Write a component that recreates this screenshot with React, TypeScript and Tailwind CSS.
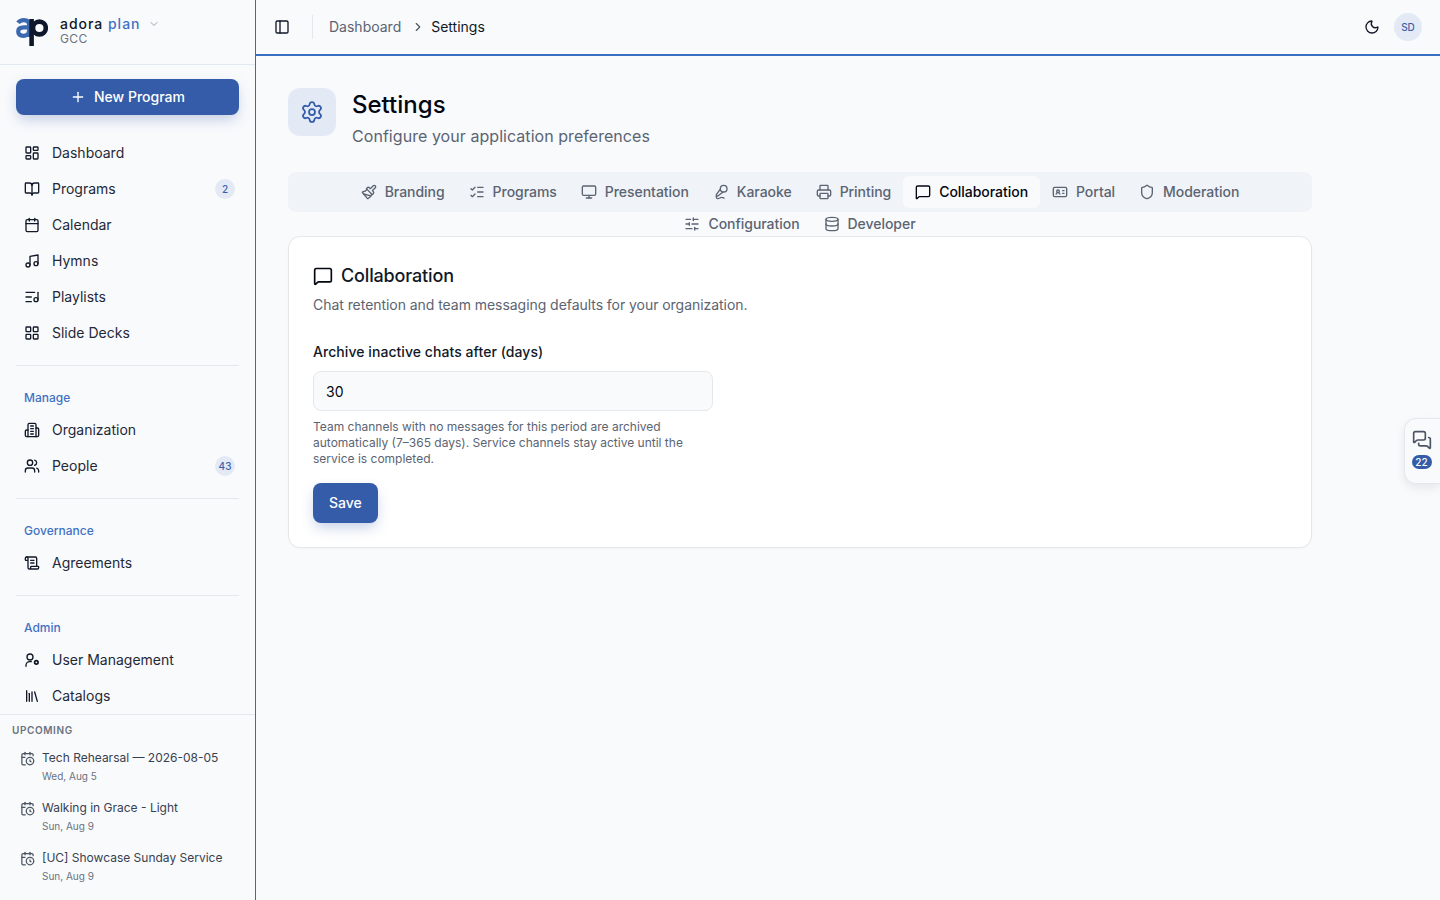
import {
  BookOpen, Calendar, CalendarClock, ChevronDown, ChevronRight, Database, IdCard,
  LayoutDashboard, LayoutGrid, Library, ListChecks, ListMusic, MessageSquare, MessagesSquare, MicVocal,
  Monitor, Moon, Music, Paintbrush, PanelLeft, Plus, Printer, ScrollText, Settings, Shield, SlidersHorizontal,
  Users,
} from 'lucide-react';

type IconProps = { size?: number; className?: string };

function OrgIcon({ size = 16, className }: IconProps) {
  return (
    <svg width={size} height={size} viewBox="0 0 24 24" fill="none" stroke="currentColor" strokeWidth="2" strokeLinecap="round" strokeLinejoin="round" className={className}>
      <path d="M6 22V4a2 2 0 0 1 2-2h8a2 2 0 0 1 2 2v18Z" />
      <path d="M6 12H4a2 2 0 0 0-2 2v6a2 2 0 0 0 2 2h2" />
      <path d="M18 9h2a2 2 0 0 1 2 2v9a2 2 0 0 1-2 2h-2" />
      <path d="M10 6h4" />
      <path d="M10 10h4" />
      <path d="M10 14h4" />
      <path d="M10 18h4" />
    </svg>
  );
}

function UserAdminIcon({ size = 16, className }: IconProps) {
  return (
    <svg width={size} height={size} viewBox="0 0 24 24" fill="none" stroke="currentColor" strokeWidth="2" strokeLinecap="round" strokeLinejoin="round" className={className}>
      <circle cx="9" cy="7.5" r="4.5" />
      <circle cx="18.5" cy="15.5" r="2.6" strokeWidth="2.6" />
      <path d="M3 21.5V20a5.5 5.5 0 0 1 5.5-5.5H11" />
    </svg>
  );
}

const mainNav = [
  { label: 'Dashboard', icon: LayoutDashboard },
  { label: 'Programs', icon: BookOpen, badge: '2' },
  { label: 'Calendar', icon: Calendar },
  { label: 'Hymns', icon: Music },
  { label: 'Playlists', icon: ListMusic },
  { label: 'Slide Decks', icon: LayoutGrid },
];

const groups = [
  {
    title: 'Manage',
    items: [
      { label: 'Organization', icon: OrgIcon },
      { label: 'People', icon: Users, badge: '43' },
    ],
  },
  { title: 'Governance', items: [{ label: 'Agreements', icon: ScrollText }] },
  {
    title: 'Admin',
    items: [
      { label: 'User Management', icon: UserAdminIcon },
      { label: 'Catalogs', icon: Library },
    ],
  },
];

const upcoming = [
  { title: 'Tech Rehearsal — 2026-08-05', date: 'Wed, Aug 5' },
  { title: 'Walking in Grace - Light', date: 'Sun, Aug 9' },
  { title: '[UC] Showcase Sunday Service', date: 'Sun, Aug 9' },
];

const tabs = [
  { label: 'Branding', icon: Paintbrush },
  { label: 'Programs', icon: ListChecks },
  { label: 'Presentation', icon: Monitor },
  { label: 'Karaoke', icon: MicVocal },
  { label: 'Printing', icon: Printer },
  { label: 'Collaboration', icon: MessageSquare, active: true },
  { label: 'Portal', icon: IdCard },
  { label: 'Moderation', icon: Shield },
  { label: 'Configuration', icon: SlidersHorizontal },
  { label: 'Developer', icon: Database },
];

function Logo() {
  return (
    <svg width="32" height="28" viewBox="0 0 32 28" fill="none" className="shrink-0">
      <path d="M2 4.8C3.5 2.8 5.6 2.1 7.8 2.1c3.6 0 5.4 2 5.4 5.2V19" stroke="#3c68b0" strokeWidth="4.2" />
      <path d="M13 9.4H8c-3.4 0-5.8 1.4-5.8 4.2 0 2.9 2.3 4.2 5.2 4.2 2.8 0 5.6-1.6 5.6-4.8" stroke="#3c68b0" strokeWidth="4.2" />
      <circle cx="23.4" cy="10" r="6.4" stroke="#0f172a" strokeWidth="4.6" />
      <path d="M15.6 1v27" stroke="#0f172a" strokeWidth="4.6" />
    </svg>
  );
}

function NavItem({ label, icon: Icon, badge }: { label: string; icon: (p: IconProps) => React.ReactNode; badge?: string }) {
  return (
    <a className="flex h-9 items-center gap-3 rounded-lg pl-2 pr-1 text-sm text-[#1f2937]">
      <Icon size={16} className="shrink-0 text-[#111827]" />
      <span className="flex-1 truncate">{label}</span>
      {badge && (
        <span className="flex h-5 w-5 items-center justify-center rounded-full bg-[#e3eaf5] text-[10px] font-medium text-[#3d5fa8]">
          {badge}
        </span>
      )}
    </a>
  );
}

function Sidebar() {
  return (
    <aside className="flex h-full w-64 shrink-0 flex-col border-r border-[#2a7a8c] bg-[#f9fafc]">
      <div className="flex h-[65px] shrink-0 items-center gap-3 border-b border-[#e2e8f0] px-4">
        <Logo />
        <div className="-mt-[3px]">
          <div className="flex items-center gap-2">
            <span className="text-sm leading-4 font-medium tracking-[0.07em] text-[#111827]">
              adora <span className="text-[#3f72c4]">plan</span>
            </span>
            <ChevronDown size={12} className="text-[#9ca3af]" />
          </div>
          <div className="text-xs leading-[14px] tracking-[0.03em] text-[#6b7280]">GCC</div>
        </div>
      </div>

      <div className="min-h-0 flex-1 overflow-hidden px-4 pt-[14px]">
        <button className="flex h-9 w-full items-center justify-center gap-2 rounded-lg bg-[#345ca8] text-sm font-medium text-white shadow-[0_6px_14px_-2px_rgba(52,92,168,0.3)]">
          <Plus size={16} />
          New Program
        </button>
        <nav className="mt-5">
          {mainNav.map(item => <NavItem key={item.label} {...item} />)}
        </nav>
        {groups.map(group => (
          <div key={group.title}>
            <div className="mt-[14px] h-px bg-[#e5e7eb]" />
            <div className="mt-6 mb-[6px] h-4 px-2 text-xs leading-4 font-medium text-[#3f72c4]">{group.title}</div>
            {group.items.map(item => <NavItem key={item.label} {...item} />)}
          </div>
        ))}
      </div>

      <div className="h-[186px] shrink-0 border-t border-[#e2e8f0] pt-[9px]">
        <div className="px-3 text-[10px] leading-3 font-semibold tracking-[0.06em] text-[#6b7280]">UPCOMING</div>
        <div className="mt-[13px]">
          {upcoming.map(item => (
            <div key={item.title} className="flex h-[50px] gap-[7px] pl-5">
              <CalendarClock size={15} className="mt-[2px] shrink-0 text-[#4b5563]" />
              <div>
                <div className="text-xs leading-[18px] whitespace-nowrap text-[#374151]">{item.title}</div>
                <div className="text-[10px] leading-[18px] text-[#6b7280]">{item.date}</div>
              </div>
            </div>
          ))}
        </div>
      </div>
    </aside>
  );
}

function Header() {
  return (
    <header className="flex h-14 shrink-0 items-center border-b-2 border-[#3b6fc4] pr-[18px] pl-[18px]">
      <PanelLeft size={16} className="text-[#111827]" />
      <div className="mr-4 ml-[22px] h-6 w-px bg-[#e5e7eb]" />
      <span className="text-sm text-[#5b6472]">Dashboard</span>
      <ChevronRight size={14} className="mr-[6px] ml-[10px] text-[#4b5563]" />
      <span className="text-sm text-[#111827]">Settings</span>
      <Moon size={16} className="mr-[14px] ml-auto text-[#111827]" />
      <div className="flex h-7 w-7 items-center justify-center rounded-full bg-[#e3eaf5] text-[10px] font-medium text-[#3d5fa8]">
        SD
      </div>
    </header>
  );
}

export default function App() {
  return (
    <div className="flex h-screen overflow-hidden bg-[#f9fafc] font-['Inter',sans-serif]">
      <Sidebar />
      <div className="relative flex min-w-0 flex-1 flex-col">
        <Header />
        <main className="flex-1 px-8 pt-8">
          <div className="w-[1024px]">
            <div className="flex items-start gap-4">
              <div className="flex h-12 w-12 items-center justify-center rounded-xl bg-[#e3eaf5]">
                <Settings size={24} strokeWidth={1.75} className="text-[#345ca8]" />
              </div>
              <div>
                <h1 className="text-2xl leading-[34px] font-medium text-[#030712]">Settings</h1>
                <p className="mt-[2px] text-base leading-6 tracking-[0.05px] text-[#5b6472]">Configure your application preferences</p>
              </div>
            </div>

            <div className="mt-6 flex h-10 flex-wrap content-start justify-center rounded-lg bg-[#f0f3f7] p-1">
              {tabs.map(({ label, icon: Icon, active }) => (
                <button
                  key={label}
                  className={
                    active
                      ? 'flex h-8 items-center gap-2 rounded-md bg-[#f9fafc] px-3 text-sm font-medium tracking-[-0.04px] text-[#030712]'
                      : 'flex h-8 items-center gap-2 rounded-md px-3 text-sm font-medium tracking-[-0.04px] text-[#5b6472]'
                  }
                >
                  <Icon size={16} />
                  {label}
                </button>
              ))}
            </div>

            <section className="mt-6 h-[312px] rounded-xl border border-[#e5e7eb] bg-white p-6 shadow-[0_1px_2px_rgba(0,0,0,0.03)]">
              <div className="flex items-center gap-2 pt-px">
                <MessageSquare size={20} className="text-[#030712]" />
                <h2 className="text-lg leading-7 font-medium tracking-[-0.15px] text-[#111827]">Collaboration</h2>
              </div>
              <p className="mt-[5px] text-sm leading-5 tracking-[-0.05px] text-[#5b6472]">
                Chat retention and team messaging defaults for your organization.
              </p>
              <label className="mt-[27px] block text-sm leading-5 font-medium tracking-[0.06px] text-[#111827]">Archive inactive chats after (days)</label>
              <input
                readOnly
                value="30"
                className="mt-[9px] block h-10 w-[400px] rounded-lg border border-[#e5e7eb] bg-[#f9fafc] px-3 text-sm text-[#030712] outline-none"
              />
              <p className="mt-2 w-[400px] text-xs leading-4 text-[#5b6472]">
                Team channels with no messages for this period are archived automatically (7–365 days). Service channels stay active until the service is completed.
              </p>
              <button className="mt-4 h-10 rounded-lg bg-[#345ca8] px-4 text-sm font-medium text-white shadow-[0_6px_14px_-2px_rgba(52,92,168,0.3)]">
                Save
              </button>
            </section>
          </div>
        </main>

        <button className="absolute top-[418px] right-0 flex h-[66px] w-9 flex-col items-center rounded-l-xl border border-r-0 border-[#e5e7eb] bg-[#f9fafc] pt-[11px] pr-[2px] shadow-[0_4px_10px_rgba(0,0,0,0.08)]">
          <MessagesSquare size={20} className="text-[#4b5563]" />
          <span className="mt-[5px] flex h-[14px] w-5 items-center justify-center rounded-full bg-[#345ca8] text-[10px] font-medium text-white">22</span>
        </button>
      </div>
    </div>
  );
}
